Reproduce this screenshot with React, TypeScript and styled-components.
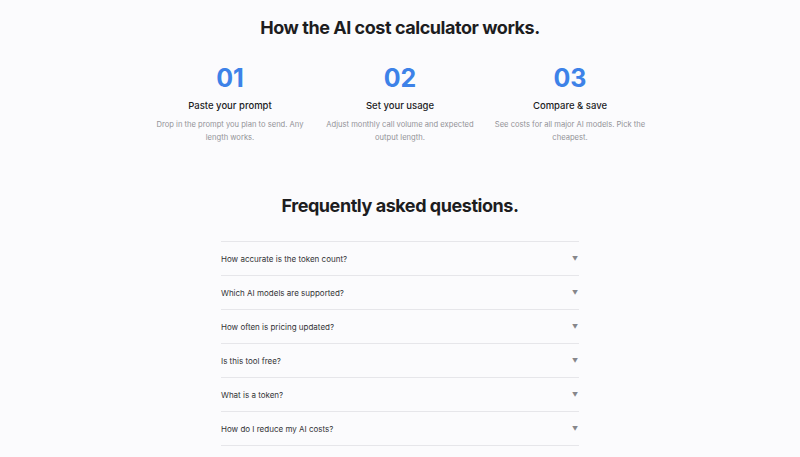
import styled, { createGlobalStyle } from "styled-components"

const GlobalStyle = createGlobalStyle`
  body {
    margin: 0;
    background: #fbfbfd;
    font-family: Inter, "Liberation Sans", sans-serif;
    color: #1d1d1f;
  }
`

const steps = [
  { num: "01", title: "Paste your prompt", text: "Drop in the prompt you plan to send. Any length works." },
  { num: "02", title: "Set your usage", text: "Adjust monthly call volume and expected output length." },
  { num: "03", title: "Compare & save", text: "See costs for all major AI models. Pick the cheapest." },
]

const faqs = [
  "How accurate is the token count?",
  "Which AI models are supported?",
  "How often is pricing updated?",
  "Is this tool free?",
  "What is a token?",
  "How do I reduce my AI costs?",
]

const App = () => {
  return (
    <>
      <GlobalStyle />
      <Page>
        <Section>
          <Heading>How the AI cost calculator works.</Heading>
          <Steps>
            {steps.map((s) => (
              <Step key={s.num}>
                <StepNum>{s.num}</StepNum>
                <StepTitle>{s.title}</StepTitle>
                <StepText>{s.text}</StepText>
              </Step>
            ))}
          </Steps>
        </Section>

        <FaqSection>
          <Heading>Frequently asked questions.</Heading>
          <FaqList>
            {faqs.map((q) => (
              <FaqRow key={q}>
                <span>{q}</span>
                <Arrow>▼</Arrow>
              </FaqRow>
            ))}
          </FaqList>
        </FaqSection>
      </Page>
    </>
  )
}

const Page = styled.div`
  display: flex;
  flex-direction: column;
  align-items: center;
  padding-top: 17px;
`

const Section = styled.section`
  display: flex;
  flex-direction: column;
  align-items: center;
`

const Heading = styled.h2`
  margin: 0;
  font-size: 18px;
  line-height: 22px;
  font-weight: 700;
  letter-spacing: -0.025em;
  color: #1d1d1f;
`

const Steps = styled.div`
  display: grid;
  grid-template-columns: repeat(3, 160px);
  column-gap: 10px;
  margin-top: 24px;
`

const Step = styled.div`
  display: flex;
  flex-direction: column;
  align-items: center;
  text-align: center;
`

const StepNum = styled.div`
  font-size: 25px;
  line-height: 30px;
  font-weight: 700;
  color: #3d82e8;
`

const StepTitle = styled.div`
  margin-top: 6px;
  font-size: 9.5px;
  line-height: 13px;
  font-weight: 500;
  color: #1d1d1f;
`

const StepText = styled.div`
  margin-top: 6px;
  font-size: 7.6px;
  line-height: 13px;
  color: #939398;
`

const FaqSection = styled.section`
  display: flex;
  flex-direction: column;
  align-items: center;
  margin-top: 51px;
`

const FaqList = styled.div`
  width: 358px;
  margin-top: 24px;
  border-top: 1px solid #e6e6ea;
`

const FaqRow = styled.div`
  display: flex;
  align-items: center;
  justify-content: space-between;
  height: 33px;
  border-bottom: 1px solid #e6e6ea;
  font-size: 8px;
  color: #333336;
`

const Arrow = styled.span`
  font-size: 6px;
  color: #86868b;
  padding-right: 1px;
`

export default App
